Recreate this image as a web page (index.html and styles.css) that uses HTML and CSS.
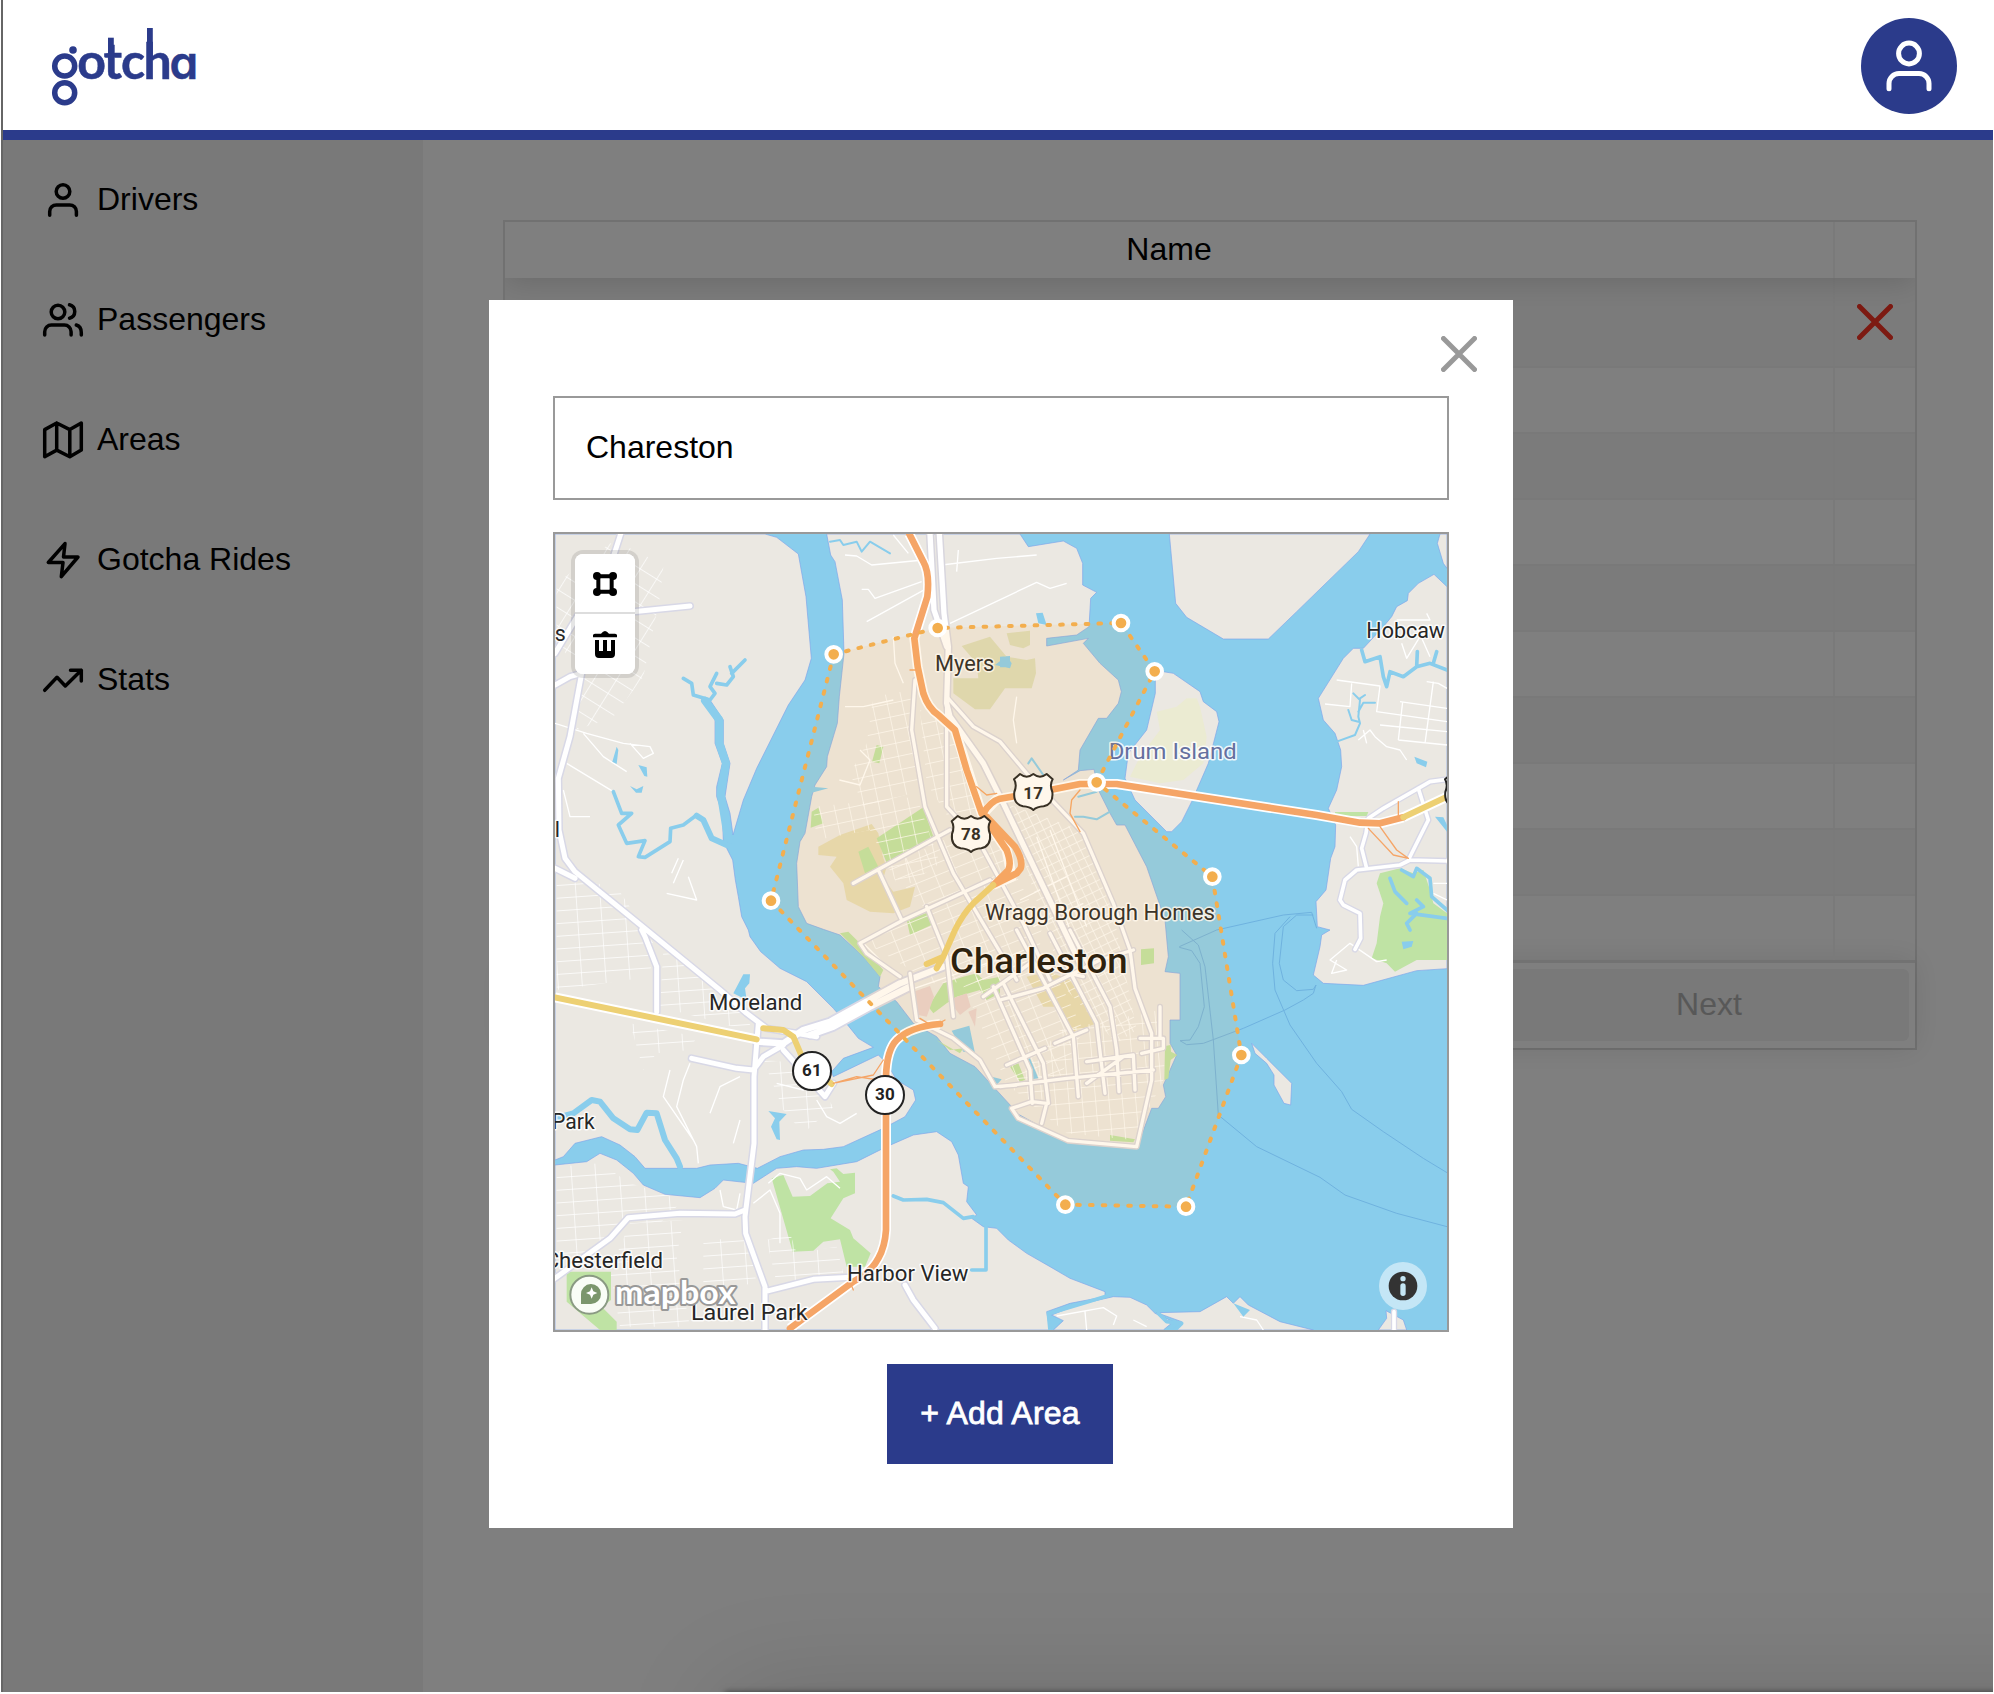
FILE: index.html
```html
<!DOCTYPE html>
<html lang="en">
<head>
<meta charset="utf-8">
<title>Gotcha – Areas</title>
<link rel="stylesheet" href="styles.css">
</head>
<body>
<div class="app">
  <header class="header">
    <svg class="logo" width="160" height="84" viewBox="50 26 160 84" role="img" aria-label="gotcha">
      <g class="logo-rings"><circle cx="64.7" cy="66" r="10"/><circle cx="64.7" cy="92.7" r="10"/></g>
      <circle cx="73" cy="50" r="3.8"/>
      <text class="logo-text" y="78.5"><tspan x="77.2">o</tspan><tspan x="103.4">t</tspan><tspan x="120.9">c</tspan><tspan x="143.6">h</tspan><tspan class="logo-a" x="169.6">a</tspan></text>
      <rect x="108" y="37.7" width="5.8" height="22"/>
      <rect x="147" y="28" width="5.8" height="30"/>
    </svg>
    <div class="avatar">
      <svg width="50" height="54" viewBox="-25 -27 50 54"><circle cy="-12.5" r="10.4"/><path d="M-20 22.7v-5.2a10 10 0 0 1 10-10h20a10 10 0 0 1 10 10v5.2"/></svg>
    </div>
  </header>

  <div class="body">
    <nav class="sidebar">
      <a class="nav-item"><svg class="nav-icon" viewBox="0 0 44 44"><circle cx="22" cy="14.5" r="6.8"/><path d="M8.7 38.3V34.6a6.7 6.7 0 0 1 6.7-6.7h13.3a6.7 6.7 0 0 1 6.7 6.7V38.3"/></svg><span>Drivers</span></a>
      <a class="nav-item"><svg class="nav-icon" viewBox="0 0 44 44"><circle cx="17" cy="15" r="6.8"/><path d="M3.7 38v-3.3a6.7 6.7 0 0 1 6.7-6.7h13a6.7 6.7 0 0 1 6.7 6.7V38M28.5 7.8a6.9 6.9 0 0 1 0 13.4M35.3 28q5 1.7 5 7.5V38"/></svg><span>Passengers</span></a>
      <a class="nav-item"><svg class="nav-icon" viewBox="0 0 44 44"><path d="M3.7 12.6v27.2l12-6.7 13.1 6.7 11.5-6.7V6L28.8 12.6 15.7 6zM15.7 6v27M28.8 12.6v27"/></svg><span>Areas</span></a>
      <a class="nav-item"><svg class="nav-icon" viewBox="0 0 44 44"><path d="M24 6.6 7.3 25.5H22l-1.7 14.2L37 20H22.5z"/></svg><span>Gotcha Rides</span></a>
      <a class="nav-item"><svg class="nav-icon" viewBox="0 0 44 44"><path d="M3.7 33.3 16 20.3l8.3 8.7 16-15.7M29.5 13.3h10.8V24"/></svg><span>Stats</span></a>
    </nav>
    <main class="main">
      <div class="table">
        <div class="thead"><div class="cell-name">Name</div><div class="cell-act"></div></div>
        <div class="tr first"><div class="cell-name"></div><div class="cell-act"><svg class="delete" width="36" height="36" viewBox="0 0 36 36"><path d="M2.5 2.5l31 31M33.5 2.5l-31 31"/></svg></div></div>
        <div class="tr"><div class="cell-name"></div><div class="cell-act"></div></div>
        <div class="tr"><div class="cell-name"></div><div class="cell-act"></div></div>
        <div class="tr"><div class="cell-name"></div><div class="cell-act"></div></div>
        <div class="tr"><div class="cell-name"></div><div class="cell-act"></div></div>
        <div class="tr"><div class="cell-name"></div><div class="cell-act"></div></div>
        <div class="tr"><div class="cell-name"></div><div class="cell-act"></div></div>
        <div class="tr"><div class="cell-name"></div><div class="cell-act"></div></div>
        <div class="tr"><div class="cell-name"></div><div class="cell-act"></div></div>
        <div class="tr"><div class="cell-name"></div><div class="cell-act"></div></div>
        <div class="pager"><button class="next" disabled>Next</button></div>
      </div>
    </main>
    <div class="overlay">
      <section class="modal">
        <svg class="close" width="36" height="36" viewBox="0 0 36 36"><path d="M2.5 2.5l31 31M33.5 2.5l-31 31"/></svg>
        <input class="field" type="text" value="Chareston">
        <div class="map">
          <svg class="map-canvas" viewBox="15 12 2676 2388" preserveAspectRatio="none">
            <defs>
              <pattern id="blocks" width="62" height="34" patternUnits="userSpaceOnUse" patternTransform="rotate(-22)"><path class="street" d="M0 0H62M0 0V34"/></pattern>
              <pattern id="blocksNW" width="44" height="40" patternUnits="userSpaceOnUse" patternTransform="rotate(-12)"><path class="street" d="M0 0H44M0 0V40"/></pattern>
              <pattern id="blocksS" width="40" height="44" patternUnits="userSpaceOnUse" patternTransform="rotate(-5)"><path class="street" d="M0 0H40M0 0V44"/></pattern>
              <pattern id="blocksE" width="24" height="26" patternUnits="userSpaceOnUse" patternTransform="rotate(-26)"><path class="street" d="M0 0H24M0 0V26"/></pattern>
              <pattern id="suburb" width="72" height="38" patternUnits="userSpaceOnUse" patternTransform="rotate(-4)"><path class="street" d="M0 0H72M0 0V38"/></pattern>
              <pattern id="suburbNW" width="58" height="46" patternUnits="userSpaceOnUse" patternTransform="rotate(32)"><path class="street" d="M0 0H58M0 0V46"/></pattern>
            </defs>
            <rect class="water" x="0" y="0" width="2700" height="2420"/>
            <g class="land">
              <path d="M15 12H645L680 22 745 72 768 200 784 385 765 450 715 525 620 715 580 810 549 915 540 850 525 800 540 700 520 640 520 570 480 510 460 508 495 570 495 640 517 700 500 770 500 800 517 850 520 935 548 990 556 1050 565 1100 575 1160 595 1200 600 1220 632 1265 690 1315 770 1355 850 1435 897 1490 925 1525 970 1552 880 1585 845 1625 850 1640 985 1575 1010 1600 1040 1650 1090 1680 1097 1710 1065 1760 1000 1795 880 1850 820 1858 760 1860 690 1880 622 1915 565 1900 480 1905 440 1915H285L255 1880 210 1845 155 1820 75 1840 40 1880 15 1890z"/>
              <path d="M15 1905 110 1895 150 1870 200 1890 250 1930 280 1965 345 1993 450 2003 495 1975 520 1950 610 1960 680 1915 740 1910 800 1915 920 1895 1010 1850 1090 1815 1160 1805 1205 1835 1225 1875 1240 1960 1255 1970 1250 2015 1280 2055 1265 2065 1300 2090 1340 2095 1375 2130 1430 2170 1500 2210 1560 2245 1665 2285 1665 2300 1560 2320 1490 2345 1500 2400H15z"/>
              <path d="M1505 2355 1580 2325 1690 2300 1740 2302 1790 2325 1815 2350 1870 2375 1840 2400H1510L1540 2372zM1820 2348 1950 2345 2030 2300 2050 2320 2070 2300 2095 2325 2190 2375 2290 2400H1880L1895 2375zM2485 2400 2510 2365 2508 2342 2560 2370 2570 2400z"/>
              <path d="M830 12H1410L1435 50 1540 33 1580 55 1598 100V165L1640 187 1622 205 1617 290 1580 315 1490 325V348L1615 325 1600 340 1650 400 1705 450 1714 485 1705 520 1670 565 1645 565 1590 660 1585 720 1540 750 1590 722 1632 718 1645 780 1680 850 1700 885 1725 885 1790 1010 1845 1170 1855 1280 1845 1325 1890 1330V1470H1860V1540L1880 1575 1840 1665 1847 1700 1825 1735H1805L1760 1855 1555 1835 1400 1750 1385 1730 1330 1670 1275 1610 1200 1570 1160 1520 1090 1480 1040 1415 985 1370 990 1340 940 1280 870 1215 820 1198 770 1180 745 1130 740 1000 750 935 765 910 785 800 795 765 830 710 832 680 862 580 868 500 882 370 877 210 855 95 842 75z"/>
              <path d="M1840 425 1816 450V490L1790 600 1735 670 1725 745 1755 810 1850 905H1865L1895 875 1925 815 1975 700 2007 575 2000 545 1960 515 1950 485 1870 430z"/>
              <path d="M1858 12 1877 220 1910 262 2020 327H2155L2240 245 2425 65 2460 12zM2670 12 2662 40 2680 100 2691 115V12z"/>
              <path d="M2691 170 2652 133 2605 160 2575 190 2572 212 2540 230 2525 260 2500 290 2440 355 2410 355 2380 385 2305 505 2320 570 2355 610 2372 660 2375 710 2360 780 2335 835 2357 885 2355 950 2342 985 2328 1080 2298 1115 2302 1190 2340 1200 2315 1215 2310 1250 2290 1335 2320 1360 2440 1366 2600 1322 2691 1316z"/>
              <path d="M2105 1540 2150 1585 2225 1660 2222 1725 2202 1720 2172 1665V1635L2150 1600 2115 1570z"/>
            </g>

            <path class="isle-park" d="M1820 545 1880 530 1910 505 1940 505 1950 530 1970 620 1960 700 1900 750 1830 760 1740 740 1770 680 1830 600z"/>
            <path class="sand" d="M1235 348 1320 320 1370 380 1430 390 1455 385 1458 430 1445 475H1365L1320 538H1275L1210 490 1210 445 1285 445 1280 400zM1370 310 1440 302V345L1420 355 1380 345z"/>
            <path class="campus" d="M805 950 870 915 965 882 985 910 1000 985 1010 1010 1000 1045 1030 1085 1095 1070 1080 1130 1030 1150 960 1145 890 1110 880 1060 840 1010 860 980 805 975zM1430 1340 1495 1325 1560 1350 1640 1480 1560 1510 1530 1430 1480 1430z"/>
            <g class="park">
              <path d="M980 925 1120 832 1150 920 1010 998zM925 965 955 950 985 1010 945 1030zM785 845 805 833 820 880 782 893zM980 645 1000 650 988 700 966 695zM1070 1170 1140 1145 1155 1180 1080 1215zM870 1210 895 1205 930 1240 1000 1320 990 1340 940 1280zM1773 1258 1812 1255V1300L1773 1305zM1845 1548 1862 1545 1863 1565 1882 1575 1862 1590 1855 1645 1843 1650zM1680 1815 1755 1828 1750 1837 1680 1832zM1380 1610 1405 1600 1425 1650 1410 1655zM1180 1360 1240 1340 1280 1330 1300 1350 1350 1340 1350 1390 1310 1410 1290 1380 1220 1400 1190 1420 1150 1450 1135 1430zM1160 1530 1200 1560 1240 1555 1230 1570z"/>
              <path d="M665 1945 700 1935 728 2000 780 1998 832 1960 870 1955 850 1925 840 1918 860 1915 880 1932 915 1928V1990L880 2005 842 2065 900 2100 910 2125 962 2170 945 2210 890 2210 870 2128 820 2135 790 2162 728 2165zM50 2225H183V2310L155 2330 200 2375V2400H150L50 2315z"/>
              <path d="M2490 1030 2550 1015 2590 1030 2620 1020 2640 1080 2650 1120 2691 1150V1290H2600L2535 1325 2510 1300 2465 1285 2480 1240 2490 1160 2500 1120 2480 1060zM2355 846H2455L2450 858H2355z"/>
            </g>
            <path class="medical" d="M1090 1385 1140 1368 1152 1400 1130 1460 1105 1455zM1195 1410 1250 1390 1262 1430 1230 1455zM1255 1445 1280 1435 1275 1490z"/>

            <g class="fills">
              <path fill="url(#blocksNW)" d="M970 500 1085 480 1080 600 1120 780 940 830 900 730 950 640z"/>
              <path fill="url(#blocksNW)" d="M790 830 1100 800 1170 1000 1050 1080 960 900 800 930z"/>
              <path fill="url(#blocksNW)" d="M1110 540 1210 600 1290 860 1200 870 1130 760z"/>
              <path fill="url(#blocks)" d="M1010 1010 1310 870 1480 1190 1400 1350 1150 1360 950 1240 1130 1140z"/>
              <path fill="url(#blocksE)" d="M1370 820 1590 900 1690 1150 1760 1500 1700 1540 1550 1380 1480 1180z"/>
              <path fill="url(#blocks)" d="M1240 1370 1460 1220 1600 1500 1530 1640 1370 1660z"/>
              <path fill="url(#blocksS)" d="M1380 1670 1530 1500 1830 1440 1845 1640 1750 1830 1550 1810z"/>
              <path fill="url(#suburb)" d="M20 1910 150 1900 240 1960 400 2010 330 2080 220 2070 100 2190 20 2200z"/>
              <path fill="url(#suburb)" d="M240 2080 400 2070 380 2180 420 2390 210 2390 180 2220zM460 2140 590 2110 620 2260 460 2280z"/>
              <path fill="url(#suburbNW)" d="M20 160 180 40 260 60 340 110 330 200 280 440 190 560 80 600 100 430 20 340z"/>
              <path fill="url(#suburb)" d="M20 1040 200 1070 310 1240 300 1340 20 1380z"/>
              <path fill="url(#suburb)" d="M340 1260 550 1400 610 1500 550 1490 330 1430z"/>
              <path fill="url(#suburb)" d="M240 1480 440 1520 420 1560 320 1570 280 1620zM640 1590 760 1600 850 1730 760 1810 700 1740z"/>
              <path fill="url(#suburb)" d="M650 2130 720 2110 740 2170 860 2150 880 2230 680 2260z"/>
            </g>
            <g class="street">
              <path d="M885 75 920 78 965 105 1120 90M1175 105 1340 85 1460 75M935 178H955L975 205 1115 155M950 275 1140 170M1200 280 1460 157 1500 175 1550 160M1030 15 1075 70M1225 60 1220 125"/>
              <path d="M885 530H940L1030 510M1400 500 1390 570 1400 640M1030 320 1035 400 1060 460M868 750 930 765 960 690 930 660"/>
              <path d="M15 580 110 610 220 640 300 650 310 670 280 685 240 640M50 700 190 785M40 780 60 860 120 860M370 1060 400 990M385 985 365 1030M415 1040 440 1110 350 1090M100 610 160 680 230 725"/>
              <path d="M2360 450 2490 468 2480 545 2691 575M2325 522 2400 530 2405 460M2550 515 2691 535M2650 455 2625 640M2490 585 2691 605M2545 630 2691 645M2558 515 2545 630M2630 455 2665 460 2691 475M2425 630 2460 600 2475 620 2510 650 2550 660 2570 690M2440 600 2450 640M2540 270H2640L2630 250M2555 340 2570 385 2610 320 2640 300M2600 290 2640 380"/>
              <path d="M2400 920 2420 950 2425 1010M2650 1060H2691M2650 1090 2691 1110M2360 1290 2345 1330 2390 1320 2340 1290 2400 1240 2480 1295 2510 1290"/>
              <path d="M655 1960 690 1930 750 1945 770 1980 830 1940 870 1975M610 2020 660 1980 690 2050 690 2140M510 1980 520 2030 560 2040 570 1990M800 1710 830 1760 870 1780 920 1750M680 1660 760 1680 790 1650M420 1600 400 1650 380 1730 440 1850 445 1900M360 1620 340 1700 430 1830M480 1750 510 1670 570 1640M550 1840 570 1770M1050 1390 1340 1290M1520 2358 1660 2333 1700 2358 1690 2385M1605 2345 1610 2400M1750 2370 1790 2390M2070 2360 2120 2370 2140 2400"/>
              <path d="M1000 1300 940 1240M1410 1110 1550 1040M1450 1190 1600 1120M1460 920 1560 1200M1500 900 1610 1190"/>
            </g>

            <g class="inlet">
              <path class="w12" d="M400 445 425 460 430 495 480 510 495 490 480 470 500 430M500 460 530 465 550 440 540 410M545 430 585 390"/>
              <path class="w22" d="M465 512 508 570 508 640 528 700 512 790 535 930"/>
              <path class="w12" d="M190 785 215 850 245 850 205 885 230 940 285 932 265 980 285 982 360 935 362 895 400 885 440 855"/>
              <path class="w16" d="M440 857 460 870 485 925 530 945M390 1910 380 1885 345 1830 320 1750 290 1748 262 1800 240 1798 190 1765 150 1715 125 1710 70 1750 15 1765"/>
              <path class="w12" d="M1030 1998 1060 2010 1130 2008 1180 2018 1240 2065 1270 2060M1308 2090 1308 2220 1265 2220"/>
              <path class="w12" d="M2435 360 2445 395 2490 380 2500 440 2510 470 2520 425 2560 440 2600 410 2640 400 2691 420M2600 410 2602 365M2650 400 2660 365"/>
              <path class="w6" d="M2410 490 2430 510 2425 560 2430 580 2415 615 2360 635M2475 518H2440L2425 545M2395 540 2405 570 2425 575M2430 505 2445 495M1435 700 1445 685 1480 735M1575 860 1600 860 1640 868 1680 845M1585 800 1640 785M840 35 870 30 880 45 920 35 935 65 960 35 1020 70M1495 330 1560 328 1618 320"/>
              <path class="w12" d="M2520 1045 2535 1085 2570 1120M2600 1110 2620 1130 2580 1150 2691 1165M2600 1150 2570 1180 2580 1200M2555 1020 2590 1040 2600 1015 2640 1045 2645 1100 2691 1140M1495 2350 1500 2400M1500 2350 1600 2320 1680 2295M1825 2350 1850 2375 1895 2380 1875 2400"/>
              <path class="pond" d="M200 650 205 660 200 702 187 695zM265 705 290 712 292 740 283 738zM240 768 260 778 280 768 275 788 258 788zM550 1390 580 1333 600 1333 598 1360 585 1375 590 1410zM655 1743 710 1752 688 1775 690 1830 680 1828 663 1790 675 1765zM1335 405 1370 378 1385 400 1380 415zM1458 250 1478 248 1490 285 1465 280zM1205 1502 1258 1487 1275 1570 1240 1565zM1420 1590 1440 1585 1465 1645 1445 1648zM1325 1640 1355 1648 1340 1665zM2593 680 2632 695 2628 712 2600 700zM2655 860 2680 862 2691 885V905zM2050 2320 2100 2340 2080 2360zM2555 1235 2590 1233 2585 1250 2560 1258zM785 770 835 775 785 788zM1350 380 1380 378 1380 412H1350z"/>
            </g>

            <g class="ferry"><path d="M1895 1200 1945 1245 1965 1310 1990 1530 2005 1755 2120 1850 2310 1942 2385 1995 2540 2050 2691 2090M1888 1252 1925 1262 1950 1300 1963 1430 1945 1490 1920 1530 1890 1532 1910 1544 1960 1540 2080 1495 2205 1440 2260 1410 2290 1390 2298 1365 2290 1378 2240 1382 2200 1350 2188 1300 2200 1190 2240 1155 2290 1155M2220 1160 2175 1210 2168 1300 2175 1380 2220 1485 2300 1600 2375 1685 2405 1738 2500 1805 2620 1885 2691 1928M1888 1250 2000 1200 2200 1155 2285 1147 2300 1195"/></g>

            <g class="road-case">
              <path class="rw22" d="M212 12 190 80 15 370M15 465 60 440 95 430 60 620 25 745 27 900 45 985 75 1025 290 1200 510 1380 590 1450 650 1495 800 1520M15 1015 75 1045 M100 260 420 228M275 1200 285 1220 320 1310 320 1445M625 1480 612 1640 612 1840 585 2060 587 2110 645 2270V2400M15 2245 90 2190 180 2125 235 2063 390 2050 555 2052 585 2040M645 2285 790 2248 930 2240M1065 2265 1090 2310 1155 2395M425 1585 560 1615 610 1620 640 1580 700 1545M700 1560 825 1700 850 1660"/>
              <path class="rw26" d="M620 1535 700 1540 760 1500 840 1475 1050 1360 1180 1310M780 1515 850 1490 960 1430 1080 1370"/>
              <path class="rw18" d="M2691 748 2640 755 2605 775 2500 835 2455 865 2448 910 2435 955 2450 1015M2605 775 2635 870 2575 990M2370 1110 2385 1050 2420 1020 2550 1005 2580 990 2691 993M2370 1110 2380 1125 2430 1150 2432 1225 2415 1258M2532 2345V2400"/>
            </g>
            <g class="road">
              <path class="rw14" d="M212 12 190 80 15 370M15 465 60 440 95 430 60 620 25 745 27 900 45 985 75 1025 290 1200 510 1380 590 1450 650 1495 800 1520M15 1015 75 1045M100 260 420 228M275 1200 285 1220 320 1310 320 1445M625 1480 612 1640 612 1840 585 2060 587 2110 645 2270V2400M15 2245 90 2190 180 2125 235 2063 390 2050 555 2052 585 2040M645 2285 790 2248 930 2240M1065 2265 1090 2310 1155 2395M425 1585 560 1615 610 1620 640 1580 700 1545M700 1560 825 1700 850 1660"/>
              <path class="rw18" d="M620 1535 700 1540 760 1500 840 1475 1050 1360 1180 1310M780 1515 850 1490 960 1430 1080 1370"/>
              <path class="rw10" d="M2691 748 2640 755 2605 775 2500 835 2455 865 2448 910 2435 955 2450 1015M2605 775 2635 870 2575 990M2370 1110 2385 1050 2420 1020 2550 1005 2580 990 2691 993M2370 1110 2380 1125 2430 1150 2432 1225 2415 1258M2532 2345V2400"/>
            </g>

            <g class="avenues-case">
              <path class="rw30" d="M1140 12 1152 240 1190 350M1168 12 1182 250 1195 350 1190 520 1200 560 1300 700 1360 820 1590 1300"/>
              <path d="M1095 450 1085 600 1125 830 1210 1030 1400 1350M1190 530 1190 830 1290 940 1420 1180 1500 1350M1190 500 1270 590 1350 635 1430 730 1600 910 1690 1120 1740 1260 1755 1375 1805 1510 1805 1650 1760 1850 1555 1832 1405 1765 1385 1735 1445 1715 1490 1720 1475 1780M910 1060 1200 900M985 1020 1055 1170M930 1240 1060 1170 1320 1050M930 1240 950 1270 1050 1340M1300 1400 1440 1300 1600 1340M1350 1410 1480 1375 1650 1290 1750 1260M1350 1670 1550 1645 1810 1620M1515 1540 1610 1500M1370 1605 1485 1555M1610 1660 1720 1580 1750 1575 1755 1680M1610 1595 1750 1575M1770 1525H1840V1555L1775 1570M1830 1430V1525M1500 1210 1640 1480 1665 1690M1560 1200 1680 1430 1700 1560 1707 1685M1400 1200 1570 1520 1585 1700M1360 1360 1480 1600 1495 1720M1330 1370 1440 1620 1447 1720M1130 1130 1190 1280 1210 1460M1080 1330 1100 1470 1210 1525 1290 1590 1335 1670 1400 1665"/>
            </g>
            <g class="avenues">
              <path class="rw20" d="M1140 12 1152 240 1190 350M1168 12 1182 250 1195 350 1190 520 1200 560 1300 700 1360 820 1590 1300"/>
              <path d="M1095 450 1085 600 1125 830 1210 1030 1400 1350M1190 530 1190 830 1290 940 1420 1180 1500 1350M1190 500 1270 590 1350 635 1430 730 1600 910 1690 1120 1740 1260 1755 1375 1805 1510 1805 1650 1760 1850 1555 1832 1405 1765 1385 1735 1445 1715 1490 1720 1475 1780M910 1060 1200 900M985 1020 1055 1170M930 1240 1060 1170 1320 1050M930 1240 950 1270 1050 1340M1300 1400 1440 1300 1600 1340M1350 1410 1480 1375 1650 1290 1750 1260M1350 1670 1550 1645 1810 1620M1515 1540 1610 1500M1370 1605 1485 1555M1610 1660 1720 1580 1750 1575 1755 1680M1610 1595 1750 1575M1770 1525H1840V1555L1775 1570M1830 1430V1525M1500 1210 1640 1480 1665 1690M1560 1200 1680 1430 1700 1560 1707 1685M1400 1200 1570 1520 1585 1700M1360 1360 1480 1600 1495 1720M1330 1370 1440 1620 1447 1720M1130 1130 1190 1280 1210 1460M1080 1330 1100 1470 1210 1525 1290 1590 1335 1670 1400 1665"/>
            </g>

            <g class="hwy-case">
              <path d="M1078 12 1120 95Q1140 130 1132 200L1093 325 1103 410 1120 490Q1135 535 1165 555L1215 600 1295 850 1370 960 1385 1040 1330 1065M1300 850 1340 808 1500 780 1590 762 1700 762 2300 855 2430 878 2490 880 2560 862M1008 1640V2100Q1005 2150 985 2185 965 2225 910 2255L720 2395M1008 1640Q1010 1560 1040 1530 1080 1490 1170 1482"/>
              <path d="M15 1402 620 1528M2560 862 2691 800"/>
            </g>
            <g class="hwy">
              <path d="M1078 12 1120 95Q1140 130 1132 200L1093 325 1103 410 1120 490Q1135 535 1165 555L1215 600 1250 720 1295 850 1370 960Q1385 1000 1375 1020L1330 1065M1300 850Q1320 815 1350 806L1500 780 1590 762 1700 762 2300 855 2430 878 2490 880 2560 862M1310 860 1395 950Q1420 990 1412 1015L1400 1030 1330 1065M1008 1640V2100Q1005 2150 985 2185 965 2225 910 2255L720 2395M1008 1640Q1010 1560 1040 1530 1080 1490 1170 1482"/>
              <path class="yellow" d="M15 1402 620 1528M2560 862 2691 800M640 1495 700 1500 730 1520 760 1590 845 1662M1330 1065 1270 1120Q1240 1150 1215 1200L1180 1280 1130 1302M1180 1280 1160 1315"/>
              <path class="ramp" d="M850 1660 920 1640 985 1650M860 1658 970 1635 1000 1590M1590 780 1565 810 1560 850 1590 905M2455 895 2530 975 2575 985M2490 890 2540 960 2575 985M2545 815V860M1280 770 1310 795 1340 790M1110 1465 1150 1490 1185 1470M895 2245 910 2280M1080 420H1100"/>
            </g>

            <g class="labels">
              <text x="1155" y="423" textLength="178" lengthAdjust="spacingAndGlyphs">Myers</text>
              <text class="isle" x="1676" y="687" textLength="384" lengthAdjust="spacingAndGlyphs">Drum Island</text>
              <text x="1305" y="1170" textLength="690" lengthAdjust="spacingAndGlyphs">Wragg Borough Homes</text>
              <text class="city" x="1200" y="1330" textLength="533" lengthAdjust="spacingAndGlyphs">Charleston</text>
              <text x="477" y="1439" textLength="280" lengthAdjust="spacingAndGlyphs">Moreland</text>
              <text x="6" y="1797" textLength="128" lengthAdjust="spacingAndGlyphs">Park</text>
              <text x="-16" y="2213" textLength="355" lengthAdjust="spacingAndGlyphs">Chesterfield</text>
              <text x="891" y="2252" textLength="364" lengthAdjust="spacingAndGlyphs">Harbor View</text>
              <text x="423" y="2371" textLength="350" lengthAdjust="spacingAndGlyphs">Laurel Park</text>
              <text x="2449" y="323" textLength="236" lengthAdjust="spacingAndGlyphs">Hobcaw</text>
              <text x="14" y="332">s</text>
              <text x="14" y="922">l</text>
            </g>
            <g class="shields">
              <path id="us" d="M1223 858Q1243 874 1263 858 1283 874 1303 858L1321 874Q1311 890 1320 912 1324 948 1294 955 1274 956 1263 966 1252 956 1232 955 1202 948 1206 912 1215 890 1205 874z"/>
              <use href="#us" x="187" y="-126"/>
              <use href="#us" x="1480" y="-126"/>
              <circle cx="786" cy="1623" r="57"/><circle cx="1005" cy="1695" r="57"/>
              <text x="1263" y="931">78</text><text x="1450" y="806">17</text><text x="786" y="1638">61</text><text x="1005" y="1711">30</text>
            </g>

            <path class="area" d="M851 373 1163 294 1713 279 1814 424 1640 757 1987 1040 2074 1575 1908 2030 1546 2024 663 1112z"/>
            <g class="vertices">
              <circle cx="851" cy="373" r="22"/><circle cx="1163" cy="294" r="22"/><circle cx="1713" cy="279" r="22"/><circle cx="1814" cy="424" r="22"/><circle cx="1640" cy="757" r="22"/><circle cx="1987" cy="1040" r="22"/><circle cx="2074" cy="1575" r="22"/><circle cx="1908" cy="2030" r="22"/><circle cx="1546" cy="2024" r="22"/><circle cx="663" cy="1112" r="22"/>
            </g>

            <g class="brand">
              <circle class="brand-disc" cx="118" cy="2294" r="57"/>
              <path class="brand-leaf" d="M93 2322V2293A30 30 0 1 1 123 2322z"/>
              <path class="brand-star" d="M125 2272 130 2284 142 2289 130 2294 125 2306 120 2294 108 2289 120 2284z"/>
              <text x="195" y="2322" textLength="362" lengthAdjust="spacingAndGlyphs">mapbox</text>
            </g>
            <circle class="info-halo" cx="2559" cy="2268" r="72"/>
            <circle class="info-disc" cx="2559" cy="2268" r="43"/>
            <g class="info-mark"><circle cx="2559" cy="2246" r="8"/><rect x="2551" y="2260" width="16" height="38" rx="8"/></g>
          </svg>
          <div class="controls">
            <button class="ctl"><svg width="24" height="24" viewBox="0 0 72 72"><path class="poly" d="M13 13H59L56 22V50L59 59H13L16 50V22z"/><circle cx="12" cy="12" r="12"/><circle cx="60" cy="12" r="12"/><circle cx="12" cy="60" r="12"/><circle cx="60" cy="60" r="12"/></svg></button>
            <button class="ctl"><svg width="24" height="27" viewBox="0 0 72 81"><path d="M0 19V13Q0 8 6 8H24Q30 0 36 0T48 8H66Q72 8 72 13V19z"/><path d="M6 27H18V60H30V27H42V60H54V27H66V69Q66 81 54 81H18Q6 81 6 69z"/></svg></button>
          </div>
        </div>
        <button class="add">+ Add Area</button>
      </section>
    </div>
  </div>
</div>
</body>
</html>
```

FILE: styles.css
```css
* { box-sizing: border-box; }
body { margin: 0; background: #fff; font-family: "Liberation Sans", Arial, sans-serif; font-size: 32px; color: #000; }
button, input { font: inherit; color: inherit; border: 0; padding: 0; margin: 0; }
svg { display: block; }

.app { width: 1992px; height: 1692px; margin: 0 1px; border-left: 2px solid #666; display: flex; flex-direction: column; overflow: hidden; }

.header { height: 140px; flex: none; background: #fff; border-bottom: 10px solid #2b3b8b; padding: 18px 36px 16px 47px; display: flex; justify-content: space-between; align-items: flex-start; }
.logo { margin-top: 8px; fill: #2b3b8b; overflow: visible; }
.logo-rings { fill: none; stroke: #2b3b8b; stroke-width: 5.5; }
.logo-text { font: 700 50px Lato, sans-serif; stroke: #2b3b8b; stroke-width: .5; }
.logo-a { font: 600 46px Inter, sans-serif; font-feature-settings: "cv11"; }
.avatar { width: 96px; height: 96px; border-radius: 50%; background: #2b3b8b; display: flex; align-items: center; justify-content: center; }
.avatar svg { fill: none; stroke: #fff; stroke-width: 5; stroke-linecap: round; }

.body { position: relative; flex: 1; display: flex; min-height: 0; overflow: hidden; }
.sidebar { width: 420px; flex: none; background: #f2f2f2; }
.nav-item { height: 120px; padding: 0 0 2px 38px; display: flex; align-items: center; gap: 12px; line-height: 36px; }
.nav-icon { width: 44px; height: 44px; fill: none; stroke: #000; stroke-width: 3.5; stroke-linecap: round; stroke-linejoin: round; }

.main { flex: 1; padding: 80px 76px 0 80px; background: #fff; }
.table { border: 2px solid #e2e2e2; }
.thead, .tr { display: grid; grid-template-columns: 1fr 80px; }
.cell-act { display: flex; align-items: center; justify-content: center; }
.cell-name { border-right: 2px solid #f4f4f4; text-align: center; }
.thead { position: relative; height: 56px; line-height: 54px; box-shadow: 0 4px 30px rgba(0, 0, 0, .15); clip-path: inset(0 0 -40px 0); }
.tr { height: 66px; border-bottom: 2px solid #f3f3f3; }
.tr.first { height: 90px; }
.tr:nth-child(even) { background: #f7f7f7; }
.tr:nth-child(11) { height: 64px; border-bottom: 0; }
.delete, .close { fill: none; stroke-width: 5; stroke-linecap: round; }
.delete { stroke: #fa3424; }
.pager { height: 88px; padding: 6px 6px; border-top: 3px solid #e4e4e4; box-shadow: 0 0 30px rgba(0, 0, 0, .1); display: flex; justify-content: flex-end; }
.next { width: 400px; height: 72px; padding-bottom: 1px; border-radius: 6px; background: #f2f2f2; color: #b0b0b0; }

.overlay { position: absolute; inset: 0; background: rgba(0, 0, 0, .5); padding: 160px 0 0 486px; }
.overlay::after { content: ""; position: absolute; left: 722px; right: -200px; top: 100%; height: 200px; box-shadow: 0 0 6px rgba(0, 0, 0, .5), 0 0 110px rgba(0, 0, 0, .14); }
.modal { width: 1024px; height: 1228px; background: #fff; padding: 36px 64px 64px; display: flex; flex-direction: column; align-items: center; }
.close { align-self: flex-end; margin: 0 -28px 24px 0; stroke: #999; flex: none; }
.field { width: 100%; height: 104px; border: 2px solid #999; background: #fff; padding: 0 31px 2px; flex: none; }
.map { position: relative; width: 896px; height: 800px; margin: 32px 0; border: 2px solid #999; overflow: hidden; flex: none; }
.add { width: 226px; height: 100px; margin-left: -2px; padding-bottom: 2px; background: #2b3b8b; color: #fff; letter-spacing: .2px; -webkit-text-stroke: .8px #fff; flex: none; }

.controls { position: absolute; left: 20px; top: 20px; width: 60px; height: 120px; border-radius: 8px; background: #fff; box-shadow: 0 0 0 4px rgba(0, 0, 0, .1); overflow: hidden; }
.ctl { width: 60px; height: 60px; background: #fff; display: flex; align-items: center; justify-content: center; }
.ctl:first-child { border-bottom: 2px solid #ddd; padding-top: 2px; }
.poly { fill: none; stroke: #000; stroke-width: 12; }

.map-canvas { width: 892px; height: 796px; }
.map-canvas path { stroke-linejoin: round; }
.water { fill: #89cdec; }
.land { fill: #ebe8e2; stroke: #7fa5ea; stroke-width: 2; }
.isle-park { fill: #ebebd2; }
.sand { fill: #dcdcb9; }
.campus { fill: #e5dcb6; }
.park { fill: #bfe3a4; }
.medical { fill: #e8d2cf; }
.street { fill: none; stroke: #fff; stroke-width: 4; }
.inlet path { fill: none; stroke: #89cdec; stroke-linecap: round; }
.w6 { stroke-width: 6; }
.w12 { stroke-width: 11; }
.w16 { stroke-width: 18; }
.w22 { stroke-width: 24; }
.inlet .pond { fill: #89cdec; stroke: none; }
.ferry path { fill: none; stroke: #6fb2df; stroke-width: 3; }
.road-case path { fill: none; stroke: #d8d8e6; stroke-linecap: round; }
.road path { fill: none; stroke: #fff; stroke-linecap: round; }
.rw10 { stroke-width: 11; }
.rw14 { stroke-width: 15; }
.rw18 { stroke-width: 19; }
.rw22 { stroke-width: 24; }
.rw26 { stroke-width: 30; }
.avenues-case path, .avenues path { fill: none; stroke-linecap: round; }
.avenues-case path { stroke: #d8d6de; stroke-width: 18; }
.avenues path { stroke: #fff; stroke-width: 10; }
.avenues-case .rw30 { stroke-width: 25; }
.avenues .rw20 { stroke-width: 16; }
.hwy-case path { fill: none; stroke: #fff; stroke-width: 30; }
.hwy path { fill: none; stroke: #f5a567; stroke-width: 20; stroke-linecap: round; }
.hwy .yellow { stroke: #edd073; stroke-width: 18; }
.hwy .ramp { stroke-width: 4; }

.labels text { font: 400 64px Roboto, sans-serif; fill: #262626; stroke: #fff; stroke-width: 9; stroke-opacity: .85; stroke-linejoin: round; paint-order: stroke; }
.labels .isle { fill: #65709f; }
.labels .city { font-size: 104px; font-weight: 500; fill: #16110a; }
.shields path, .shields circle, .shields use { fill: #fff; stroke: #222; stroke-width: 6; }
.shields text { font: 700 51px Roboto, sans-serif; fill: #222; text-anchor: middle; letter-spacing: 1px; }
.area { fill: #fbb03b; fill-opacity: .1; stroke: #f3ae4e; stroke-width: 12; stroke-linecap: round; stroke-dasharray: 8 30.3; }
.vertices { fill: #f3ae4e; stroke: #fff; stroke-width: 12; }
.brand-disc { fill: #fff; fill-opacity: .9; stroke: #8a9a83; stroke-width: 6; }
.brand-leaf { fill: #7b966c; }
.brand-star { fill: #fff; }
.brand text { font: 700 98px Lato, sans-serif; fill: #fff; stroke: #999; stroke-width: 12; stroke-linejoin: round; paint-order: stroke; }
.info-halo { fill: #fff; fill-opacity: .5; }
.info-disc { fill: #333; }
.info-mark { fill: #c4e6f5; }
```
